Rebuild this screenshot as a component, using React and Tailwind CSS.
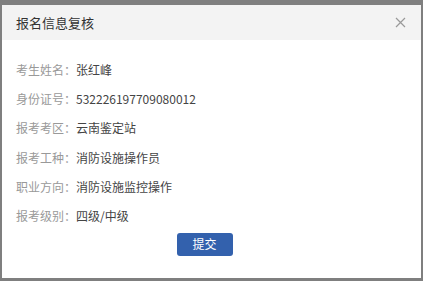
const rows = [
  ["考生姓名：", "张红峰"],
  ["身份证号：", "532226197709080012"],
  ["报考考区：", "云南鉴定站"],
  ["报考工种：", "消防设施操作员"],
  ["职业方向：", "消防设施监控操作"],
  ["报考级别：", "四级/中级"],
];

export default function App() {
  return (
    <div
      className="w-[423px] h-[281px] bg-[#7f7f7f] pl-[2px] pr-[2px] pt-[5px] pb-[3px]"
      style={{ fontFamily: '"Noto Sans CJK SC", "Noto Sans", sans-serif' }}
    >
      <div className="h-full bg-white flex flex-col">
        <div className="h-[35px] bg-[#f3f3f3] flex items-center justify-between pl-[14px] pr-[15px]">
          <span className="text-[13px] text-[#333]">报名信息复核</span>
          <svg width="11" height="11" viewBox="0 0 11 11" className="text-[#999]">
            <path d="M1 1L10 10M10 1L1 10" stroke="currentColor" strokeWidth="1.2" />
          </svg>
        </div>
        <div className="flex flex-col pt-[15px] pl-[14px]">
          {rows.map(([label, value]) => (
            <div key={label} className="flex items-center h-[29.3px] text-[12px]">
              <span className="w-[60px] text-[#999]">{label}</span>
              <span className="text-[#444]">{value}</span>
            </div>
          ))}
        </div>
        <div className="flex justify-center mt-[2px] pr-[14px]">
          <button className="w-[56px] h-[23px] rounded-[3px] bg-[#3361ad] text-white text-[12px]">
            提交
          </button>
        </div>
      </div>
    </div>
  );
}
